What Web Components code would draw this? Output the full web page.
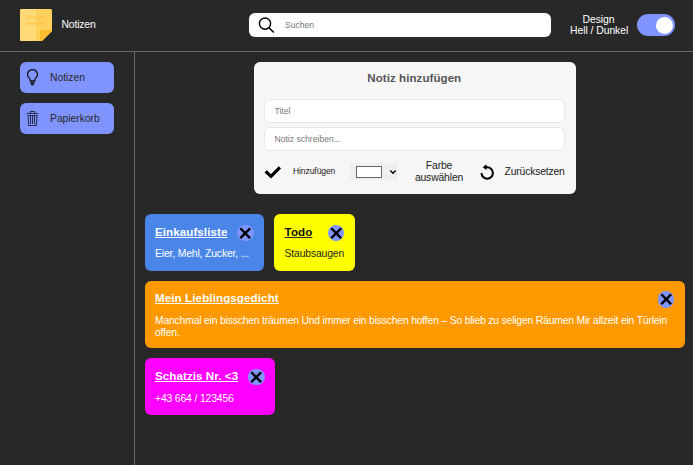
<!DOCTYPE html>
<html lang="de"><head><meta charset="utf-8"><title>Notizen</title>
<style>
html,body{margin:0;height:100%;overflow:hidden}
body{background:#282828;font:10.4px/11.6px "Liberation Sans",Arial,sans-serif;letter-spacing:-.16px;color:#fff}
</style></head><body>
<notes-app></notes-app>
<script>
const define = (name, html) => customElements.define(name, class extends HTMLElement {
  constructor() {
    super();
    this.attachShadow({mode: 'open'}).innerHTML = '<style>*{box-sizing:border-box}svg{display:block;flex:none}</style>' + html;
  }
});

define('note-logo', `<style>:host{display:block;width:32px;height:32px}</style>
<svg width="32" height="32" viewBox="0 0 32 32"><path d="M1.5 0h29A1.5 1.5 0 0 1 32 1.5V22L22 32H1.5A1.5 1.5 0 0 1 0 30.5v-29A1.5 1.5 0 0 1 1.5 0z" fill="#ffd15c"/><path d="M1.5 0H16v32H1.5A1.5 1.5 0 0 1 0 30.5v-29A1.5 1.5 0 0 1 1.5 0z" fill="#ffda77"/><path d="M20 32V22.500L22 21h10v1L22 32z" fill="#fdbd2c"/><path d="M6.5 8.7h18.5M6.5 14.7h18.5" stroke="#ffc84a" stroke-width="1.800"/></svg>`);

define('search-field', `<style>
:host{display:flex;align-items:center;width:302px;height:24px;background:#fff;border-radius:6px;padding-left:9px;box-sizing:border-box}
input{border:0;outline:0;background:none;flex:1;padding:0;margin-left:10.500px;font:8.6px "Liberation Sans",Arial,sans-serif}
input::placeholder{color:#777}</style>
<svg width="17" height="17" viewBox="0 0 17 17" fill="none" stroke="#000" stroke-width="1.4"><circle cx="7" cy="6.6" r="5.6"/><path d="M11 10.7l4.8 4.8" stroke-width="1.6"/></svg>
<input placeholder="Suchen">`);

define('toggle-switch', `<style>:host{display:flex;width:38px;height:22px;border-radius:11px;background:#8094ff;padding:2.5px;box-sizing:border-box;justify-content:flex-end}i{width:17px;height:17px;border-radius:50%;background:#fff}</style><i></i>`);

define('app-header', `<style>
:host{display:flex;align-items:center;height:51.5px;box-sizing:border-box;border-bottom:1px solid #686868;padding:0 18px 0 20px}
.name{margin-left:9.500px;width:187px}.mode{margin-left:19.500px;width:57px;text-align:center;margin-right:10px;white-space:nowrap;letter-spacing:-.05px}
</style><note-logo></note-logo><span class="name">Notizen</span><search-field></search-field><span class="mode">Design<br>Hell / Dunkel</span><toggle-switch></toggle-switch>`);

define('nav-item', `<style>:host{display:flex;align-items:center;width:94px;height:31px;border-radius:6px;background:#8094ff;color:#282828;box-sizing:border-box;padding-left:6px}
.ico{width:13px;margin-right:11px}</style><span class="ico"><slot name="icon"></slot></span><slot></slot>`);

define('side-nav', `<style>:host{display:flex;flex-direction:column;gap:10.3px;width:134.5px;box-sizing:border-box;border-right:1px solid #686868;padding:10.3px 0 0 20px;letter-spacing:-.05px}</style>
<nav-item><svg slot="icon" width="13" height="17" viewBox="0 0 13 17" fill="none" stroke="#111" stroke-width="1.3"><path d="M4.3 12V11C4 9 1.5 8.4 1.5 5.6a5 5 0 0 1 10 0C11.500 8.400 9 9 8.700 11v1z"/><path d="M4.200 13.800h4.600M5 15.500h3"/></svg>Notizen</nav-item>
<nav-item><svg slot="icon" width="13" height="17" viewBox="0 0 13 17" fill="none" stroke="#252b4b" stroke-width="1"><path d="M.8 3.500h11.400M4.300 3.300V1.500h4.400v1.800M1.700 5.500h9.600M2 5.500l.6 10h7.800l.6-10M4.500 6v8M6.500 6v8M8.500 6v8"/></svg>Papierkorb</nav-item>`);

define('text-field', `<style>:host{display:block;height:24px}input{display:block;width:100%;height:100%;border:1px solid #e8e8e8;border-radius:6px;background:#fff;padding:0 10px;outline:0;font:8.6px "Liberation Sans",Arial,sans-serif}input::placeholder{color:#777}</style><input>`);

define('color-picker', `<style>:host{display:flex;align-items:center;width:48px;height:17px;background:#efefef;padding-left:6px;box-sizing:border-box}i{width:26px;height:12px;border:1px solid #666;background:#fff;margin-right:7.500px}</style><i></i><svg width="8" height="6" viewBox="0 0 8 6"><path d="M1.300 1.500L4 4.200l2.700-2.700" fill="none" stroke="#000" stroke-width="1.400"/></svg>`);

define('note-form', `<style>
:host{display:block;width:322px;height:132.500px;box-sizing:border-box;border-radius:6px;background:#f6f6f6;color:#222;padding:10.500px 10.500px 0 10px}
h2{margin:0 0 14px;font-size:11.56px;line-height:13px;text-align:center;color:#555;letter-spacing:.06px}
text-field{margin-bottom:3.500px}
.row{display:flex;align-items:center;height:24px;margin-top:9px}
.add{font-size:8.56px;width:56.500px;margin-left:10.500px;letter-spacing:-.1px}.pick{width:49px;text-align:center;margin:0 16px 0 17px}.reset{margin-left:11px;white-space:nowrap;letter-spacing:-.18px}
</style><h2>Notiz hinzufügen</h2><text-field id="a"></text-field><text-field id="b"></text-field>
<div class="row"><svg width="19" height="16" viewBox="0 0 19 16"><path d="M5.300 8.500l4.200 3.900 7.800-7.800" transform="translate(-2.500 0)" fill="none" stroke="#000" stroke-width="3.200" stroke-linecap="square" stroke-linejoin="miter"/></svg><span class="add">Hinzufügen</span><color-picker></color-picker><span class="pick">Farbe auswählen</span><svg width="14" height="16" viewBox="0 0 14 16"><path d="M4.800 3.300H7.200a5.700 5.700 0 1 1-5.700 5.700" fill="none" stroke="#000" stroke-width="2"/><path d="M2.700 3.200L6.500 .3v5.800z"/></svg><span class="reset">Zurücksetzen</span></div>`);

define('close-button', `<style>:host{display:block;width:16.400px;height:16.400px;border-radius:50%;background:#8094ff}</style><svg width="16.400" height="16.400" viewBox="0 0 16 16"><path d="M4 4l8 8M12 4l-8 8" stroke="#000" stroke-width="2.300" stroke-linecap="square"/></svg>`);

define('note-card', `<style>
:host{display:block;box-sizing:border-box;border-radius:6px;padding:10.400px 10.500px 0;background:var(--bg);color:var(--fg,#fff);height:var(--h,56.700px);width:var(--w)}
header{display:flex;justify-content:space-between;height:16.400px;margin-bottom:7.500px}
h3{margin:0;font-size:11.56px;line-height:14px;text-decoration:underline;white-space:nowrap;letter-spacing:.09px}
</style><header><h3><slot name="title"></slot></h3><close-button></close-button></header><slot></slot>`);

define('notes-app', `<style>
:host{display:flex;flex-direction:column;height:465px}
.body{display:flex;flex:1}
main{flex:1;padding:10.200px 8px 0 10px;display:flex;flex-direction:column}
note-form{margin-left:109px;margin-bottom:20px}
.cards{display:flex;flex-wrap:wrap;align-content:flex-start;gap:10.100px}
</style><app-header></app-header><div class="body"><side-nav></side-nav><main><note-form></note-form><div class="cards">
<note-card style="--bg:#4a86e8;--w:119.500px"><span slot="title">Einkaufsliste</span>Eier, Mehl, Zucker, ...</note-card>
<note-card style="--bg:#ff0;--fg:#282828;--w:80.500px"><span slot="title" style="color:#111">Todo</span>Staubsaugen</note-card>
<note-card style="--bg:#f90;--w:540px;--h:67.300px;letter-spacing:-.2px"><span slot="title" style="letter-spacing:.12px">Mein Lieblingsgedicht</span>Manchmal ein bisschen träumen Und immer ein bisschen hoffen – So blieb zu seligen Räumen Mir allzeit ein Türlein offen.</note-card>
<note-card style="--bg:#f0f;--w:130.500px"><span slot="title">Schatzis Nr. &lt;3</span>+43 664 / 123456</note-card>
</div></main></div>`);

const form = document.querySelector('notes-app').shadowRoot.querySelector('note-form').shadowRoot;
form.querySelector('#a').shadowRoot.querySelector('input').placeholder = 'Titel';
form.querySelector('#b').shadowRoot.querySelector('input').placeholder = 'Notiz schreiben...';
</script></body></html>
